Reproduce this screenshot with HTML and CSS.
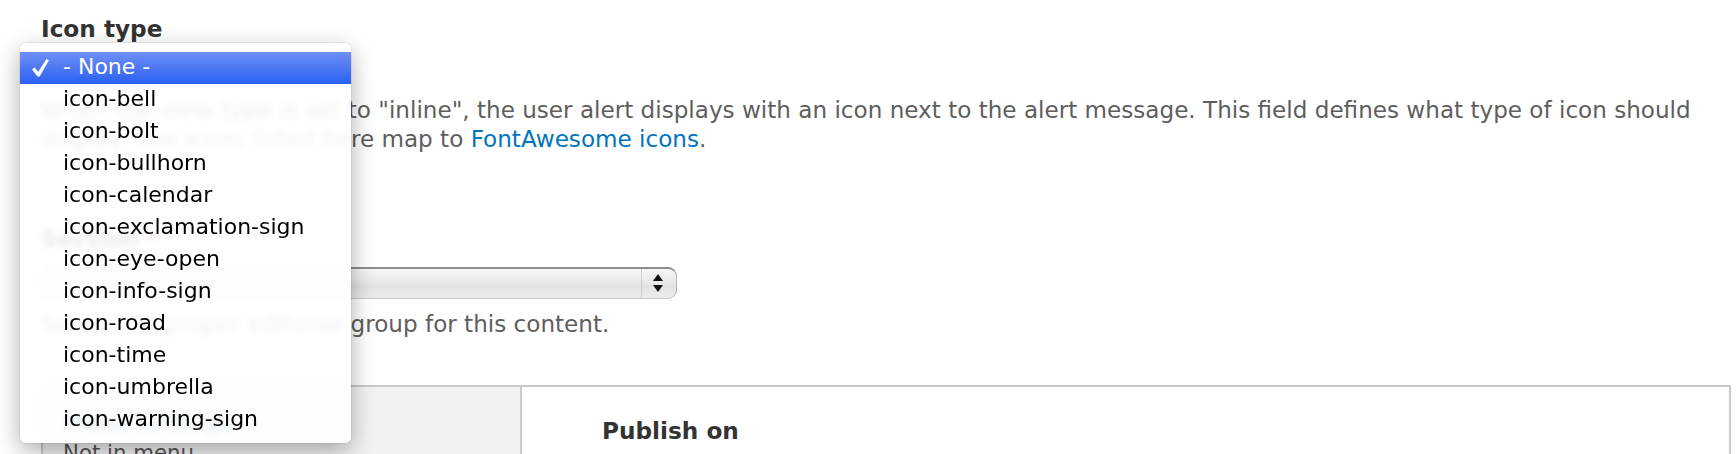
FILE: index.html
```html
<!DOCTYPE html>
<html>
<head>
<meta charset="utf-8">
<title>Icon type</title>
<link rel="stylesheet" href="styles.css">
</head>
<body>
<div class="page">
  <div class="form-item icon-type">
    <label class="label">Icon type</label>
    <div class="select-slot"></div>
    <div class="description">When the view type is set to "inline", the user alert displays with an icon next to the alert message. This field defines what type of icon should display. The icons listed here map to <a href="#">FontAwesome icons</a>.</div>

    <div class="popup">
      <div class="popup-item selected">
        <svg class="check" width="17" height="18" viewBox="0 0 17 18"><polygon points="0,10.2 2.6,8.6 6.2,12.8 14.6,0 16.9,1.3 7.6,17.6 5.4,17.6" fill="#fff"/></svg>
        <span>- None -</span>
      </div>
      <div class="popup-item">icon-bell</div>
      <div class="popup-item">icon-bolt</div>
      <div class="popup-item">icon-bullhorn</div>
      <div class="popup-item">icon-calendar</div>
      <div class="popup-item">icon-exclamation-sign</div>
      <div class="popup-item">icon-eye-open</div>
      <div class="popup-item">icon-info-sign</div>
      <div class="popup-item">icon-road</div>
      <div class="popup-item">icon-time</div>
      <div class="popup-item">icon-umbrella</div>
      <div class="popup-item">icon-warning-sign</div>
    </div>
  </div>

  <div class="form-item section">
    <label class="label">Section <span class="required">*</span></label>
    <div class="select-box">
      <span class="select-value"></span>
      <span class="select-arrows">
        <svg width="12" height="20" viewBox="0 0 12 20"><polygon points="6,0 11,7 1,7" fill="#111"/><polygon points="1,11 11,11 6,18" fill="#111"/></svg>
      </span>
    </div>
    <div class="description">Select the proper editorial group for this content.</div>
  </div>

  <div class="vtabs">
    <div class="vtabs-list">
      <div class="vtab">
        <div class="vtab-title">Menu settings</div>
        <div class="vtab-summary">Not in menu</div>
      </div>
    </div>
    <div class="vtabs-pane">
      <div class="label">Publish on</div>
    </div>
  </div>
</div>
</body>
</html>
```

FILE: styles.css
```css
* { box-sizing: border-box; }
html, body { margin: 0; background: #fff; }
body {
  font-family: "DejaVu Sans", "Liberation Sans", sans-serif;
  color: #333;
}
.page {
  padding: 14px 5px 0 41px;
  height: 454px;
  overflow: hidden;
}
.form-item { position: relative; }
.label {
  display: block;
  font-weight: bold;
  font-size: 23.2px;
  line-height: 30px;
  color: #333;
}
.required { color: #e00; }
.select-slot { height: 52px; }
.description {
  font-size: 23.1px;
  line-height: 29px;
  color: #5e5e5e;
}
.description a { color: #0074bd; text-decoration: none; }

/* open popup menu */
.popup {
  position: absolute;
  left: -21px;
  top: 29px;
  width: 331px;
  height: 400px;
  padding: 9px 0 7px;
  border-radius: 6px;
  background: rgba(255, 255, 255, 0.9);
  -webkit-backdrop-filter: blur(3px);
  backdrop-filter: blur(3px);
  box-shadow: 0 0 0 1px rgba(0, 0, 0, 0.06), 0 8px 24px rgba(0, 0, 0, 0.32);
  z-index: 10;
}
.popup-item {
  position: relative;
  height: 32px;
  line-height: 30px;
  padding-left: 43px;
  font-size: 22px;
  color: #000;
  white-space: nowrap;
}
.popup-item.selected {
  color: #fff;
  background: linear-gradient(#6f8ff6, #2a61f2);
}
.check {
  position: absolute;
  left: 12px;
  top: 7px;
}

/* section select */
.section { margin-top: 70px; }
.select-box {
  margin-top: 13px;
  width: 636px;
  height: 32px;
  display: flex;
  border: 1px solid #b5b5b5;
  border-top: 2px solid #8d8d8d;
  border-bottom-color: #c8c8c8;
  border-radius: 4px 9px 9px 4px;
  background: linear-gradient(#f6f6f6 0%, #e9e9e9 45%, #e2e2e2 60%, #ededed 100%);
}
.select-value { flex: 1; }
.select-arrows {
  width: 35px;
  border-left: 1px solid #cfcfcf;
  display: flex;
  align-items: center;
  justify-content: center;
  padding-right: 2px;
}
.section .description { margin-top: 11px; }

/* vertical tabs */
.vtabs {
  margin-top: 46px;
  display: flex;
  height: 130px;
  border: 2px solid #cacaca;
  border-bottom: none;
}
.vtabs-list {
  width: 479px;
  background: #f2f2f2;
  border-right: 2px solid #cacaca;
}
.vtab { padding: 22px 20px 0 20px; }
.vtab-title {
  font-weight: bold;
  font-size: 21px;
  line-height: 29px;
  color: #0074bd;
}
.vtab-summary {
  font-size: 21.3px;
  line-height: 29px;
  color: #555;
}
.vtabs-pane {
  flex: 1;
  padding: 29px 0 0 80px;
}
```
